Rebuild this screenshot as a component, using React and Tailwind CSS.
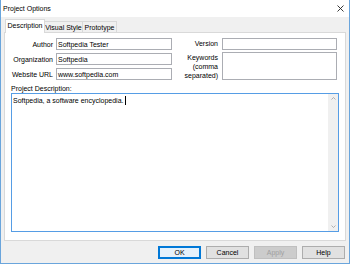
import React from "react";

function Input({ value, w = "w-[116px]" }) {
  return (
    <div className={`h-[12px] ${w} border border-[#abadb3] bg-white flex items-center pl-[1px] text-black leading-none`}>
      {value}
    </div>
  );
}

function Btn({ children, primary, disabled }) {
  const base = "w-[43px] h-[13px] flex items-center justify-center leading-none border";
  if (primary) return <div className={`${base} border-[#0078d7] bg-[#e5f1fb] shadow-[inset_0_0_0_1px_#0078d7]`}>{children}</div>;
  if (disabled) return <div className={`${base} border-[#bfbfbf] bg-[#cccccc] text-[#a0a0a0]`}>{children}</div>;
  return <div className={`${base} border-[#adadad] bg-[#e1e1e1]`}>{children}</div>;
}

export default function App() {
  return (
    <div
      className="w-[350px] h-[264px] bg-[#f0f0f0] border-l border-r border-b border-[#6aa5dc] flex flex-col text-[7px] text-black"
      style={{ fontFamily: '"Liberation Sans", Arial, sans-serif' }}
    >
      {/* title bar */}
      <div className="h-[17px] bg-white flex items-center justify-between pl-[2px] pr-[5px] shrink-0">
        <span className="text-[7px] leading-none">Project Options</span>
        <svg width="7" height="7" viewBox="0 0 7 7">
          <path d="M0.5 0.5 L6.5 6.5 M6.5 0.5 L0.5 6.5" stroke="#222" strokeWidth="0.9" />
        </svg>
      </div>

      {/* tabs */}
      <div className="mt-[2px] h-[13px] flex items-end pl-[4px] shrink-0">
        <div className="relative z-10 h-[14px] -mb-[1px] w-[40px] bg-white border-t border-l border-r border-[#d9d9d9] flex items-start pt-[2px] justify-center leading-none">
          Description
        </div>
        <div className="h-[11px] w-[38px] border-t border-r border-[#d9d9d9] flex items-center justify-center leading-none">
          Visual Style
        </div>
        <div className="h-[11px] w-[34px] border-t border-r border-[#d9d9d9] flex items-center justify-center leading-none">
          Prototype
        </div>
      </div>

      {/* panel */}
      <div className="mx-[3px] w-[342px] h-[209px] bg-white border border-[#d9d9d9] flex flex-col pt-[5px] pb-[8px] shrink-0">
        <div className="flex">
          <div className="grid grid-cols-[48px_116px] gap-x-[3px] gap-y-[3px] items-center">
            <div className="text-right leading-none">Author</div>
            <Input value="Softpedia Tester" />
            <div className="text-right leading-none">Organization</div>
            <Input value="Softpedia" />
            <div className="text-right leading-none">Website URL</div>
            <Input value="www.softpedia.com" />
          </div>
          <div className="ml-[8px] grid grid-cols-[38px_115px] gap-x-[4px] gap-y-[2px] items-start">
            <div className="text-right leading-[12px]">Version</div>
            <Input value="" w="w-[115px]" />
            <div className="text-right leading-[9px] pt-[1px]">
              Keywords
              <br />
              (comma
              <br />
              separated)
            </div>
            <div className="h-[28px] w-[115px] border border-[#abadb3] bg-white" />
          </div>
        </div>
        <div className="mt-[4px] pl-[6px] leading-[9px]">Project Description:</div>
        <div className="mt-[0px] mx-[6px] flex-1 border border-[#569de5] bg-white flex">
          <div className="flex-1 pl-[1px] pt-[2px] leading-[9px] flex items-start">
            <span>Softpedia, a software encyclopedia.</span>
            <span className="ml-[1px] h-[9px] border-l border-black" />
          </div>
          <div className="w-[10px] bg-[#f0f0f0] flex flex-col justify-between items-center py-[3px]">
            <svg width="5" height="3" viewBox="0 0 5 3">
              <path d="M0.5 2.5 L2.5 0.5 L4.5 2.5" stroke="#a0a0a0" strokeWidth="0.8" fill="none" />
            </svg>
            <svg width="5" height="3" viewBox="0 0 5 3">
              <path d="M0.5 0.5 L2.5 2.5 L4.5 0.5" stroke="#a0a0a0" strokeWidth="0.8" fill="none" />
            </svg>
          </div>
        </div>
      </div>

      {/* buttons */}
      <div className="mt-[5px] flex justify-end gap-[5px] pr-[4px]">
        <Btn primary>OK</Btn>
        <Btn>Cancel</Btn>
        <Btn disabled>Apply</Btn>
        <Btn>Help</Btn>
      </div>
    </div>
  );
}
